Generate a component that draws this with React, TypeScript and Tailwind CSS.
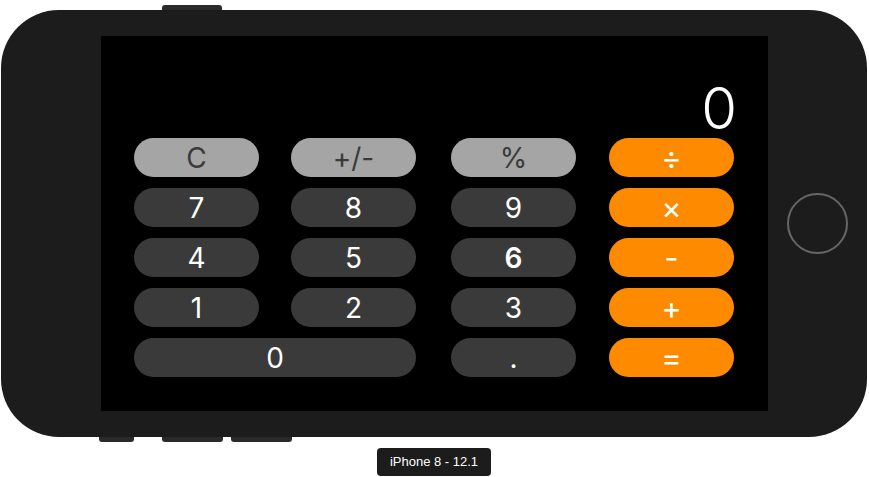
import React from "react";

type Btn = { label: string; kind: "gray" | "dark" | "orange"; wide?: boolean; cls?: string };

const rows: Btn[][] = [
  [
    { label: "C", kind: "gray" },
    { label: "+/-", kind: "gray" },
    { label: "%", kind: "gray" },
    { label: "÷", kind: "orange" },
  ],
  [
    { label: "7", kind: "dark" },
    { label: "8", kind: "dark" },
    { label: "9", kind: "dark" },
    { label: "×", kind: "orange" },
  ],
  [
    { label: "4", kind: "dark" },
    { label: "5", kind: "dark" },
    { label: "6", kind: "dark", cls: "font-semibold text-[21px]" },
    { label: "-", kind: "orange" },
  ],
  [
    { label: "1", kind: "dark" },
    { label: "2", kind: "dark" },
    { label: "3", kind: "dark" },
    { label: "+", kind: "orange" },
  ],
  [
    { label: "0", kind: "dark", wide: true },
    { label: ".", kind: "dark" },
    { label: "=", kind: "orange" },
  ],
];

const kindCls = {
  gray: "bg-[#a5a5a5] text-[#3a3a3a] text-[28px]",
  dark: "bg-[#3a3a3a] text-white text-[28px]",
  orange: "bg-[#fe8a00] text-white text-[31px]",
};

function Key({ b }: { b: Btn }) {
  return (
    <div
      className={`${kindCls[b.kind]} ${b.wide ? "col-span-2 w-[282px]" : "w-[125px]"} h-[39px] rounded-[20px] flex items-center justify-center leading-none ${b.cls ?? ""}`}
    >
      {b.label}
    </div>
  );
}

export default function App() {
  return (
    <div className="w-[869px] h-[477px] bg-white overflow-hidden" style={{ fontFamily: "Inter, 'Liberation Sans', sans-serif" }}>
      <div className="pt-[5px]">
        <div className="ml-[162px] w-[60px] h-[5px] rounded-t-[3px] bg-[#2a2a2a]" />
        <div className="ml-[1px] w-[866px] h-[427px] rounded-[58px] bg-[#1c1c1c] flex items-start">
          <div className="ml-[100px] mt-[26px] w-[667px] h-[375px] bg-black flex flex-col justify-end pl-[33px] pr-[34px] pb-[34px]">
            <div className="flex justify-end mb-[1px]">
              <div className="text-white text-[58px] font-light leading-[58px] mr-[-3px]">0</div>
            </div>
            <div className="grid grid-cols-[157px_160px_158px_125px] gap-y-[11px]">
              {rows.map((r, i) => r.map((b, j) => <Key key={`${i}-${j}`} b={b} />))}
            </div>
          </div>
          <div className="ml-[19px] mt-[183px] w-[61px] h-[61px] rounded-full border-2 border-[#666666]" />
        </div>
        <div className="flex ml-[99px]">
          <div className="w-[35px] h-[5px] rounded-b-[3px] bg-[#2a2a2a]" />
          <div className="ml-[28px] w-[61px] h-[5px] rounded-b-[3px] bg-[#2a2a2a]" />
          <div className="ml-[8px] w-[61px] h-[5px] rounded-b-[3px] bg-[#2a2a2a]" />
        </div>
        <div className="flex justify-center ml-[1px] w-[866px] mt-[6px]">
          <div
            className="h-[28px] px-[13px] rounded-[4px] bg-[#1c1c1c] text-white text-[13px] flex items-center"
            style={{ fontFamily: "'Liberation Sans', Arial, sans-serif" }}
          >
            iPhone 8 - 12.1
          </div>
        </div>
      </div>
    </div>
  );
}
